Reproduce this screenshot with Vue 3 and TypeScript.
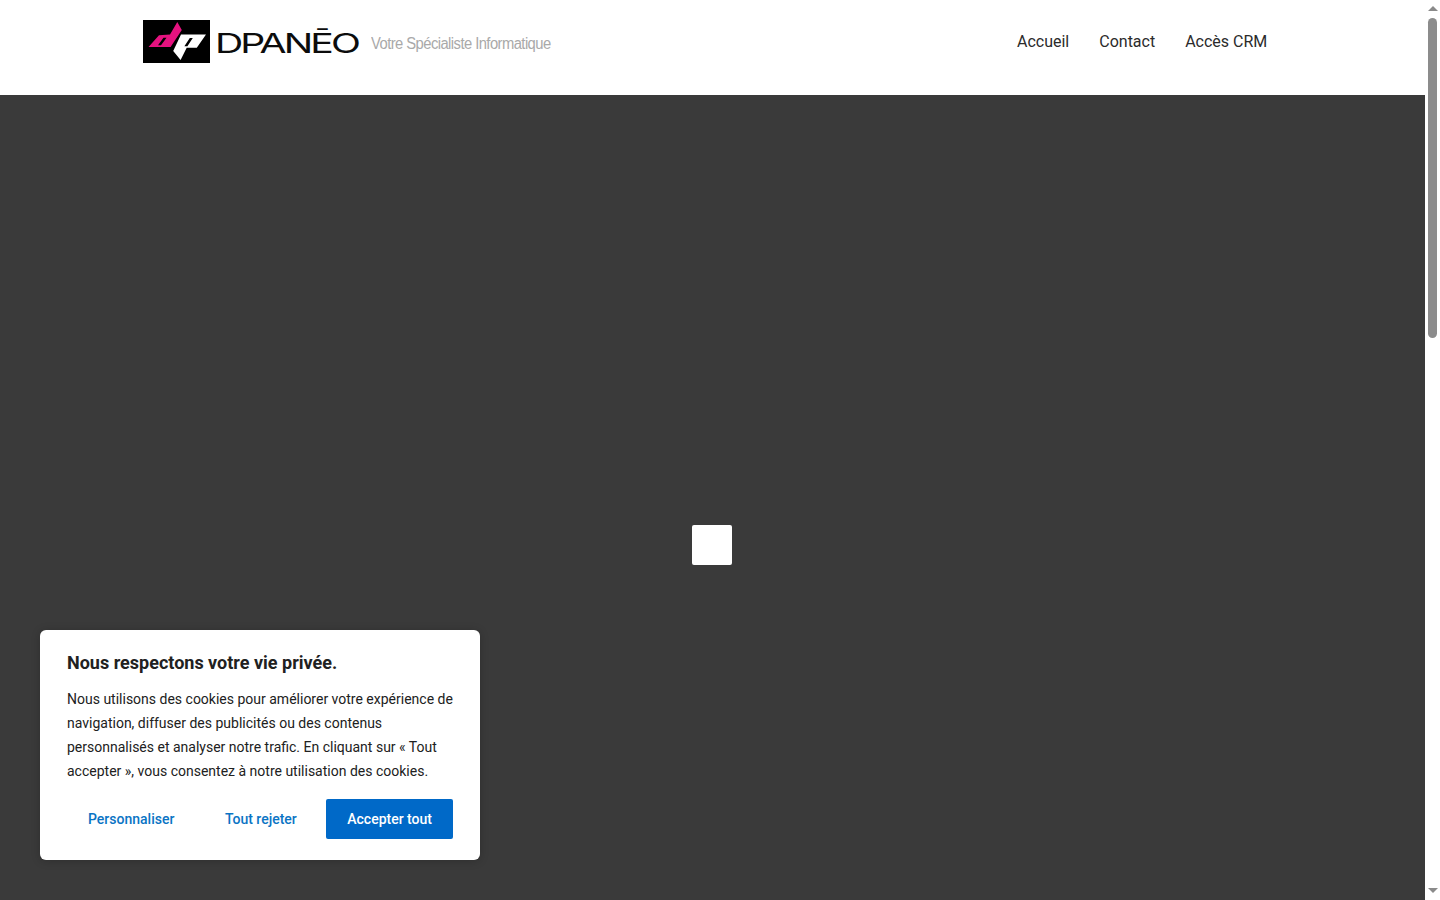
<script setup lang="ts">
const navItems: string[] = ['Accueil', 'Contact', 'Accès CRM']
</script>

<template>
  <div class="shell">
    <main class="page">
      <header class="header">
        <a class="logo" href="#" aria-label="DPANĒO">
          <svg class="logo-mark" viewBox="0 0 67 43" width="67" height="43">
            <rect width="67" height="43" fill="#000" />
            <path fill="#e5127f" fill-rule="evenodd" d="M5.5 27 16 15.2 27 14.6 34.3 2 38.8 10 27.6 27ZM20.5 17.8 15 25.2H18L23.5 17.8Z" />
            <path fill="#fff" fill-rule="evenodd" d="M38 14.6H63L53.8 27.8 43.7 27.8 37.6 40 30.2 31ZM46.8 18 41.4 26.2H44.4L49.8 18Z" />
          </svg>
          <svg class="logo-text" viewBox="0 0 150 43" width="150" height="43">
            <text x="5" y="33" class="word" textLength="143" lengthAdjust="spacingAndGlyphs">DPANĒO</text>
          </svg>
          <span class="tag">Votre Spécialiste Informatique</span>
        </a>
        <nav class="nav">
          <a v-for="item in navItems" :key="item" href="#">{{ item }}</a>
        </nav>
      </header>
      <section class="hero">
        <div class="square"></div>
      </section>
    </main>

    <aside class="scrollbar" aria-hidden="true">
      <span class="arrow up"></span>
      <span class="thumb"></span>
      <span class="arrow down"></span>
    </aside>

    <div class="cookie">
      <p class="cookie-title">Nous respectons votre vie privée.</p>
      <p class="cookie-text">Nous utilisons des cookies pour améliorer votre expérience de navigation, diffuser des publicités ou des contenus personnalisés et analyser notre trafic. En cliquant sur « Tout accepter », vous consentez à notre utilisation des cookies.</p>
      <div class="cookie-actions">
        <button class="btn link">Personnaliser</button>
        <button class="btn link">Tout rejeter</button>
        <button class="btn solid">Accepter tout</button>
      </div>
    </div>
  </div>
</template>

<style>
html, body { margin: 0; height: 100%; overflow: hidden; background: #fff; }
</style>

<style scoped>
.shell {
  position: relative;
  display: flex;
  height: 100vh;
  overflow: hidden;
  font-family: Roboto, "Liberation Sans", sans-serif;
}
.page { flex: 1; min-width: 0; }
.header {
  display: flex;
  justify-content: space-between;
  height: 95px;
  box-sizing: border-box;
  padding: 20px 157.7px 0 143px;
  background: #fff;
}
.logo { display: flex; height: 43px; text-decoration: none; }
.logo-mark, .logo-text { display: block; flex: none; }
.word {
  font-family: Inter, "Liberation Sans", Arial, sans-serif;
  font-size: 27px;
  font-weight: 400;
  letter-spacing: -2px;
  fill: #0c0c0c;
}
.tag {
  flex: none;
  margin-left: 11px;
  padding-top: 14px;
  font-family: "Liberation Sans", Arial, sans-serif;
  font-size: 16px;
  line-height: 20px;
  letter-spacing: -0.6px;
  color: #a9a9a9;
  transform: scaleX(0.923);
  transform-origin: left center;
}
.nav { display: flex; gap: 30px; height: 43px; padding-top: 11px; box-sizing: border-box; }
.nav a {
  color: #2b2b2b;
  font-size: 16px;
  line-height: 21px;
  text-decoration: none;
}
.hero {
  height: 900px;
  box-sizing: border-box;
  padding-right: 1px;
  display: flex;
  align-items: center;
  justify-content: center;
  background: #3a3a3a;
}
.square { width: 40px; height: 40px; background: #fff; border-radius: 2px; }
.scrollbar {
  flex: none;
  width: 15px;
  display: flex;
  flex-direction: column;
  align-items: center;
  background: #fff;
}
.arrow { width: 0; height: 0; border-left: 5px solid transparent; border-right: 5px solid transparent; flex: none; }
.arrow.up { border-bottom: 5px solid #8a8a8a; margin-top: 6px; }
.arrow.down { border-top: 5px solid #8a8a8a; margin-top: auto; margin-bottom: 7px; }
.thumb {
  width: 9px;
  height: 320px;
  margin-top: 7px;
  border-radius: 5px;
  background: #8c8c8c;
  flex: none;
}
.cookie {
  position: absolute;
  left: 40px;
  bottom: 40px;
  width: 440px;
  height: 230px;
  box-sizing: border-box;
  padding: 21px 27px;
  background: #fff;
  border-radius: 6px;
  box-shadow: 0 1px 10px rgba(0, 0, 0, 0.2);
  color: #212121;
}
.cookie-title {
  margin: 0 0 12px;
  font-size: 18px;
  line-height: 24px;
  font-weight: 700;
}
.cookie-text {
  margin: 0;
  font-size: 14px;
  line-height: 24px;
}
.cookie-actions {
  display: flex;
  justify-content: flex-end;
  gap: 8.5px;
  margin-top: 16px;
}
.btn {
  height: 40px;
  padding: 0 21px;
  border: 0;
  border-radius: 2px;
  font-family: inherit;
  font-size: 14px;
  font-weight: 500;
  cursor: pointer;
}
.link { background: transparent; color: #0a74c4; }
.solid { background: #0069c8; color: #fff; }
</style>
